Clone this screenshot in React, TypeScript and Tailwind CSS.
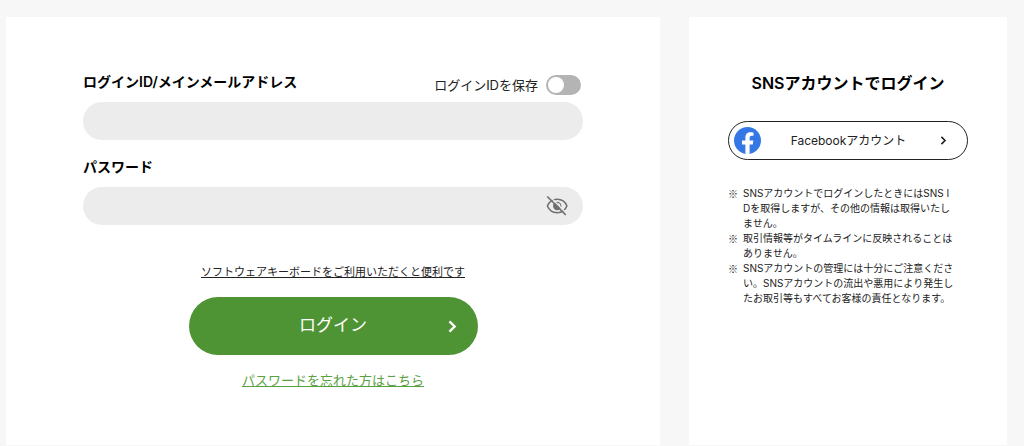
import { useState } from "react";

const NOTES = [
  ["SNSアカウントでログインしたときにはSNS I", "Dを取得しますが、その他の情報は取得いたし", "ません。"],
  ["取引情報等がタイムラインに反映されることは", "ありません。"],
  ["SNSアカウントの管理には十分にご注意くださ", "い。SNSアカウントの流出や悪用により発生し", "たお取引等もすべてお客様の責任となります。"],
];

function Chevron({ className }: { className: string }) {
  return (
    <svg className={className} viewBox="0 0 8 12" fill="none" stroke="currentColor" strokeWidth={2.2}>
      <path d="M1.2 1.2L6 6l-4.8 4.8" />
    </svg>
  );
}

function EyeOff() {
  return (
    <svg className="w-[22px] h-[22px]" viewBox="0 0 22 22" fill="none">
      <path d="M1.4 11C3.2 6.7 6.8 4.3 11.2 4.3S19.2 6.7 20.9 11c-1.7 4.3-5.3 6.7-9.7 6.7S3.2 15.3 1.4 11z" stroke="#6f6f6f" strokeWidth={1.5} />
      <circle cx="11.2" cy="11" r="4.2" fill="#6f6f6f" />
      <path d="M11.4 8.6a2.5 2.5 0 0 1 2.4 2.5" stroke="#ececec" strokeWidth={1.2} />
      <path d="M2.8 .6L21 18.8" stroke="#ececec" strokeWidth={1.4} />
      <path d="M1.3 1.5L19.8 20" stroke="#6f6f6f" strokeWidth={1.7} />
    </svg>
  );
}

function FacebookLogo() {
  return (
    <svg className="w-[27px] h-[27px] shrink-0" viewBox="0 0 24 24">
      <circle cx="12" cy="12" r="12" fill="#3578e5" />
      <path fill="#fff" d="M16.67 15.47L17.2 12h-3.33V9.75c0-.95.47-1.88 1.96-1.88h1.51V4.92s-1.37-.24-2.69-.24c-2.74 0-4.53 1.67-4.53 4.67V12H7.08v3.47h3.04v8.39a12.1 12.1 0 0 0 3.75 0v-8.39h2.8z" />
    </svg>
  );
}

function LoginForm() {
  const [save, setSave] = useState(false);
  const [visible, setVisible] = useState(false);

  return (
    <form className="bg-white px-[77px] pt-[58px] pb-[54px]" onSubmit={(e) => e.preventDefault()}>
      <div className="flex items-center justify-between h-5">
        <label htmlFor="login-id" className="text-[14px] leading-4 font-semibold pb-[6px]">ログインID/メインメールアドレス</label>
        <div className="flex items-center gap-2 pr-[2px]">
          <label htmlFor="save-id" className="text-[13px] leading-5 text-[#222]">ログインIDを保存</label>
          <input id="save-id" type="checkbox" role="switch" checked={save} onChange={(e) => setSave(e.target.checked)}
            className="appearance-none w-[35px] h-5 p-[2px] rounded-full bg-[#b4b4b4] checked:bg-[#4f9434] flex before:block before:size-4 before:rounded-full before:bg-white checked:before:ml-auto" />
        </div>
      </div>
      <input id="login-id" type="text" className="block w-full h-[38px] mt-[7px] px-5 rounded-full bg-[#ececec] outline-none" />

      <label htmlFor="password" className="block mt-[17px] text-[14px] leading-5 font-semibold">パスワード</label>
      <div className="flex items-center h-[38px] mt-[10px] pl-5 pr-[15px] rounded-full bg-[#ececec]">
        <input id="password" type={visible ? "text" : "password"} className="flex-1 min-w-0 bg-transparent outline-none" />
        <button type="button" aria-label="パスワードを表示" onClick={() => setVisible(!visible)}><EyeOff /></button>
      </div>

      <div className="flex flex-col items-center mt-[37px]">
        <a href="#keyboard" className="text-[11px] leading-5 underline text-[#222]">ソフトウェアキーボードをご利用いただくと便利です</a>
        <button type="submit" className="grid grid-cols-[1fr_auto_1fr] items-center w-[289px] max-w-full h-[58px] mt-[15px] px-[21px] rounded-full bg-[#4f9434] text-white text-[17px]">
          <span className="col-start-2">ログイン</span>
          <Chevron className="w-[9px] h-[13px] justify-self-end" />
        </button>
        <a href="#forgot" className="mt-[15px] text-[13px] leading-5 underline text-[#5aa13f]">パスワードを忘れた方はこちら</a>
      </div>
    </form>
  );
}

function SnsLogin() {
  return (
    <section className="bg-white px-[39px] pt-[54px] pb-10">
      <h2 className="text-center text-[16px] leading-6 font-semibold whitespace-nowrap">SNSアカウントでログイン</h2>
      <button type="button" className="flex items-center w-full h-[39px] mt-[26px] pl-[5px] pr-5 rounded-full border border-[#222] text-[12px] text-[#222]">
        <FacebookLogo />
        <span className="flex-1 pr-1 text-center">Facebookアカウント</span>
        <Chevron className="w-[7px] h-[9px]" />
      </button>
      <ul className="mt-[26px] text-[10px] leading-[15px] text-[#222]">
        {NOTES.map((lines) => (
          <li key={lines[0]} className="flex gap-[5px] whitespace-nowrap">
            <span className="font-['Noto_Sans_CJK_JP',sans-serif]">※</span>
            <p>{lines.map((l) => <span key={l} className="block">{l}</span>)}</p>
          </li>
        ))}
      </ul>
    </section>
  );
}

export default function App() {
  return (
    <main className="grid grid-cols-[654fr_318fr] gap-[29px] min-h-screen pt-[17px] pl-[6px] pr-[17px] pb-px bg-[#f7f7f7] text-black font-['Inter','Noto_Sans_CJK_JP',sans-serif]">
      <LoginForm />
      <SnsLogin />
    </main>
  );
}
